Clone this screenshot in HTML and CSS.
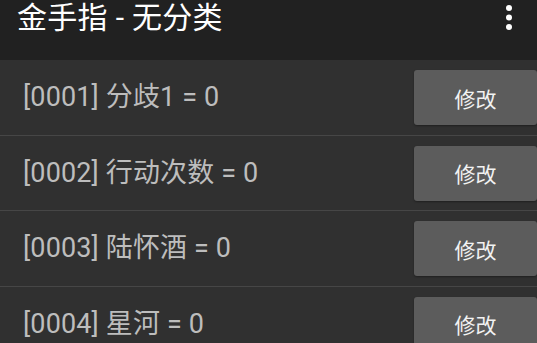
FILE: index.html
```html
<!DOCTYPE html>
<html lang="zh-CN">
<head>
<meta charset="utf-8">
<title>金手指 - 无分类</title>
<link rel="stylesheet" href="styles.css">
</head>
<body>
<div class="app">
  <header class="toolbar">
    <div class="title">金手指 - 无分类</div>
    <div class="overflow" aria-label="更多">
      <svg width="8" height="28" viewBox="0 0 8 28"><circle cx="4" cy="4" r="3" fill="#fff"/><circle cx="4" cy="13.5" r="3" fill="#fff"/><circle cx="4" cy="23" r="3" fill="#fff"/></svg>
    </div>
  </header>
  <ul class="list">
    <li class="row"><span class="label">[0001] 分歧1 = 0</span><button class="edit">修改</button></li>
    <li class="row"><span class="label">[0002] 行动次数 = 0</span><button class="edit">修改</button></li>
    <li class="row"><span class="label">[0003] 陆怀酒 = 0</span><button class="edit">修改</button></li>
    <li class="row"><span class="label">[0004] 星河 = 0</span><button class="edit">修改</button></li>
  </ul>
</div>
</body>
</html>
```
FILE: styles.css
```css
* { box-sizing: border-box; }
html, body {
  margin: 0;
  padding: 0;
  background: #303030;
  font-family: Roboto, "Noto Sans CJK SC", sans-serif;
  overflow: hidden;
}
.app {
  width: 537px;
  height: 343px;
  display: flex;
  flex-direction: column;
  background: #303030;
  overflow: hidden;
}
.toolbar {
  height: 60px;
  flex: none;
  background: #212121;
  display: flex;
  justify-content: space-between;
  align-items: flex-start;
  padding: 2px 24px 0 17px;
}
.title {
  color: #ffffff;
  font-size: 30px;
  line-height: 32px;
  letter-spacing: 0.3px;
}
.overflow {
  padding-top: 2px;
  display: flex;
}
.list {
  list-style: none;
  margin: 0;
  padding: 0;
  flex: 1;
  min-height: 0;
  overflow: hidden;
}
.row {
  height: 75.5px;
  border-bottom: 1.5px solid #464646;
  display: flex;
  align-items: center;
  justify-content: space-between;
  padding: 0 0 0 23px;
}
.label {
  color: #bdbdbd;
  font-size: 27px;
  line-height: 32px;
  letter-spacing: 0.15px;
}
.edit {
  width: 123px;
  height: 55px;
  margin-top: 1px;
  border: none;
  border-radius: 3px;
  background: #5c5c5c;
  color: #f2f2f2;
  font-family: Roboto, "Noto Sans CJK SC", sans-serif;
  font-size: 21px;
  padding: 0;
  box-shadow: 0 1px 2px rgba(0,0,0,0.35);
}
```
